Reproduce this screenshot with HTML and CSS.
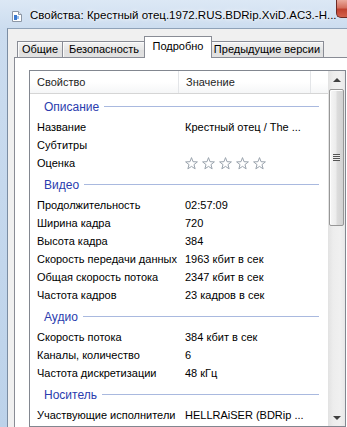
FILE: index.html
```html
<!DOCTYPE html>
<html lang="ru">
<head>
    <meta charset="UTF-8">
    <meta name="viewport" content="width=device-width, initial-scale=1.0">
    <title>Свойства: Крестный отец</title>
    <link rel="stylesheet" href="styles.css">
</head>
<body>
<div class="window">
    <!-- заголовок окна -->
    <div class="titlebar">
        <svg class="file-icon" width="10" height="11" viewBox="0 0 10 11">
            <path d="M0.5 0.5 H6.5 L9.5 3.5 V10.5 H0.5 Z" fill="#fff" stroke="#8c97a6"/>
            <path d="M6.5 0.5 V3.5 H9.5" fill="#e4e9f0" stroke="#8c97a6"/>
            <rect x="2" y="4" width="3" height="5" fill="#3d7bd0"/>
            <rect x="5" y="5" width="2" height="3" fill="#9cc0ea"/>
        </svg>
        <span class="caption">Свойства: Крестный отец.1972.RUS.BDRip.XviD.AC3.-H...</span>
        <span class="close"></span>
    </div>

    <div class="client">
        <!-- вкладки -->
        <div class="tabs">
            <div class="tab tab-general">Общие</div>
            <div class="tab tab-security">Безопасность</div>
            <div class="tab tab-details active">Подробно</div>
            <div class="tab tab-versions">Предыдущие версии</div>
        </div>

        <div class="panel">
            <div class="listview">
                <div class="lv-main">
                    <div class="lv-header">
                        <div class="hcell hcell-prop">Свойство</div>
                        <div class="hcell hcell-val">Значение</div>
                        <div class="hcell hcell-rest"></div>
                    </div>

                    <div class="group"><span>Описание</span><i></i></div>
                    <div class="row"><span class="prop">Название</span><span class="val">Крестный отец / The ...</span></div>
                    <div class="row"><span class="prop">Субтитры</span><span class="val"></span></div>
                    <div class="row">
                        <span class="prop">Оценка</span>
                        <span class="val stars">
                            <svg class="star" viewBox="0 0 13 13"><path d="M6.5 0.6 L8.03 4.7 L12.4 4.88 L8.97 7.6 L10.14 11.82 L6.5 9.4 L2.86 11.82 L4.03 7.6 L0.6 4.88 L4.97 4.7 Z"/></svg>
                            <svg class="star" viewBox="0 0 13 13"><path d="M6.5 0.6 L8.03 4.7 L12.4 4.88 L8.97 7.6 L10.14 11.82 L6.5 9.4 L2.86 11.82 L4.03 7.6 L0.6 4.88 L4.97 4.7 Z"/></svg>
                            <svg class="star" viewBox="0 0 13 13"><path d="M6.5 0.6 L8.03 4.7 L12.4 4.88 L8.97 7.6 L10.14 11.82 L6.5 9.4 L2.86 11.82 L4.03 7.6 L0.6 4.88 L4.97 4.7 Z"/></svg>
                            <svg class="star" viewBox="0 0 13 13"><path d="M6.5 0.6 L8.03 4.7 L12.4 4.88 L8.97 7.6 L10.14 11.82 L6.5 9.4 L2.86 11.82 L4.03 7.6 L0.6 4.88 L4.97 4.7 Z"/></svg>
                            <svg class="star" viewBox="0 0 13 13"><path d="M6.5 0.6 L8.03 4.7 L12.4 4.88 L8.97 7.6 L10.14 11.82 L6.5 9.4 L2.86 11.82 L4.03 7.6 L0.6 4.88 L4.97 4.7 Z"/></svg>
                        </span>
                    </div>

                    <div class="group"><span>Видео</span><i></i></div>
                    <div class="row"><span class="prop">Продолжительность</span><span class="val">02:57:09</span></div>
                    <div class="row"><span class="prop">Ширина кадра</span><span class="val">720</span></div>
                    <div class="row"><span class="prop">Высота кадра</span><span class="val">384</span></div>
                    <div class="row"><span class="prop">Скорость передачи данных</span><span class="val">1963 кбит в сек</span></div>
                    <div class="row"><span class="prop">Общая скорость потока</span><span class="val">2347 кбит в сек</span></div>
                    <div class="row"><span class="prop">Частота кадров</span><span class="val">23 кадров в сек</span></div>

                    <div class="group"><span>Аудио</span><i></i></div>
                    <div class="row"><span class="prop">Скорость потока</span><span class="val">384 кбит в сек</span></div>
                    <div class="row"><span class="prop">Каналы, количество</span><span class="val">6</span></div>
                    <div class="row"><span class="prop">Частота дискретизации</span><span class="val">48 кГц</span></div>

                    <div class="group"><span>Носитель</span><i></i></div>
                    <div class="row"><span class="prop">Участвующие исполнители</span><span class="val">HELLRAiSER (BDRip ...</span></div>
                </div>

                <!-- полоса прокрутки -->
                <div class="scrollbar">
                    <div class="sb-btn"><span class="arrow-up"></span></div>
                    <div class="sb-thumb"><span class="grip"></span></div>
                    <div class="sb-track"></div>
                    <div class="sb-btn"><span class="arrow-down"></span></div>
                </div>
            </div>
        </div>
    </div>
</div>
</body>
</html>
```

FILE: styles.css
```css
body {
    margin: 0;
    width: 347px;
    height: 427px;
    overflow: hidden;
    background: #c6d8ec;
    font-family: "Liberation Sans", Arial, sans-serif;
    font-size: 11px;
    color: #000;
}

.window {
    width: 347px;
    height: 427px;
    display: flex;
    flex-direction: column;
    background: linear-gradient(#dce8f5, #cbdcef 30px, #bcd2ea);
}

/* заголовок */
.titlebar {
    height: 28px;
    flex: none;
    display: flex;
    align-items: flex-start;
}
.file-icon {
    margin: 11px 0 0 12px;
    flex: none;
}
.caption {
    flex: 1;
    min-width: 0;
    margin-left: 8px;
    padding-top: 8px;
    line-height: 15px;
    font-size: 11.5px;
    white-space: nowrap;
    overflow: hidden;
    text-shadow: 0 0 6px #fff, 0 0 3px #fff;
}
.close {
    flex: none;
    width: 11px;
    height: 18px;
    box-sizing: border-box;
    border: 1px solid #6d2a24;
    border-top: none;
    border-right: none;
    border-radius: 0 0 0 5px;
    background: linear-gradient(#e9a99d, #d4705f 45%, #c0412f 55%, #d3614c);
}

/* клиентская область */
.client {
    flex: 1;
    margin-left: 7px;
    border-left: 1px solid #7b8da3;
    border-top: 1px solid #8fa2b8;
    background: #f0f0f0;
    padding-top: 7px;
    display: flex;
    flex-direction: column;
}

.tabs {
    flex: none;
    display: flex;
    align-items: flex-end;
    height: 21px;
    margin-left: 9px;
}
.tab {
    height: 16px;
    box-sizing: border-box;
    border: 1px solid #898c95;
    border-bottom: none;
    background: linear-gradient(#f4f4f4, #e6e6e6 50%, #dedede 51%, #e2e2e2);
    box-shadow: inset 1px 1px 0 #fbfbfb;
    text-align: center;
    line-height: 15px;
    white-space: nowrap;
}
.tab-general { width: 46px; }
.tab-security { width: 84px; margin-left: -1px; }
.tab-details { width: 68px; margin-left: -2px; }
.tab-versions { width: 114px; margin-left: -2px; }
.tab.active {
    position: relative;
    z-index: 1;
    height: 22px;
    margin-bottom: -1px;
    background: #fff;
    box-shadow: none;
    line-height: 18px;
}

.panel {
    flex: 1;
    margin-left: 6px;
    border: 1px solid #898c95;
    border-right: none;
    border-bottom: none;
    background: #fff;
    padding: 12px 0 0 14px;
}

/* список свойств */
.listview {
    width: 317px;
    height: 357px;
    box-sizing: border-box;
    border: 1px solid #828790;
    display: flex;
    overflow: hidden;
}
.lv-main {
    flex: 1;
    min-width: 0;
}
.lv-header {
    display: flex;
    height: 23px;
    box-sizing: border-box;
    border-bottom: 1px solid #d5d5d5;
    background: linear-gradient(#fff, #fff 50%, #f5f6f7);
}
.hcell {
    box-sizing: border-box;
    border-right: 1px solid #e3e5e8;
    padding: 3px 0 0 7px;
    line-height: 17px;
    color: #1e1e1e;
}
.hcell-prop { width: 149px; }
.hcell-val { width: 132px; }
.hcell-rest { flex: 1; border-right: none; }

.group {
    display: flex;
    align-items: center;
    height: 24px;
    padding: 1px 9px 0 14px;
    box-sizing: border-box;
    color: #2a3cae;
    font-size: 12px;
}
.group i {
    flex: 1;
    height: 1px;
    margin-left: 5px;
    background: #a9b9df;
}

.row {
    display: flex;
    height: 18px;
    line-height: 18px;
    white-space: nowrap;
}
.prop {
    flex: none;
    width: 148px;
    padding-left: 7px;
    box-sizing: border-box;
}
.val {
    padding-left: 7px;
}
.stars {
    display: flex;
    align-items: center;
    gap: 4px;
}
.star {
    width: 13px;
    height: 13px;
    fill: #fff;
    stroke: #9aa3ad;
    stroke-width: 1;
    stroke-linejoin: round;
}

/* прокрутка */
.scrollbar {
    width: 17px;
    flex: none;
    display: flex;
    flex-direction: column;
    background: linear-gradient(90deg, #e2e2e2, #ededed 30%, #f0f0f0 70%, #e8e8e8);
}
.sb-btn {
    height: 17px;
    flex: none;
    display: flex;
    align-items: center;
    justify-content: center;
}
.arrow-up,
.arrow-down {
    width: 0;
    height: 0;
    border-left: 4px solid transparent;
    border-right: 4px solid transparent;
}
.arrow-up { border-bottom: 4px solid #404040; }
.arrow-down { border-top: 4px solid #404040; }
.sb-thumb {
    height: 137px;
    margin: 1px 1px 0 1px;
    flex: none;
    box-sizing: border-box;
    border: 1px solid #979797;
    border-radius: 2px;
    background: linear-gradient(90deg, #f6f6f6, #ececec 45%, #dcdcdc 55%, #d2d2d2);
    box-shadow: inset 1px 1px 0 #fdfdfd;
    display: flex;
    align-items: center;
    justify-content: center;
}
.grip {
    width: 7px;
    height: 7px;
    background: repeating-linear-gradient(#555 0 1px, #eee 1px 2px);
}
.sb-track {
    flex: 1;
}
```
